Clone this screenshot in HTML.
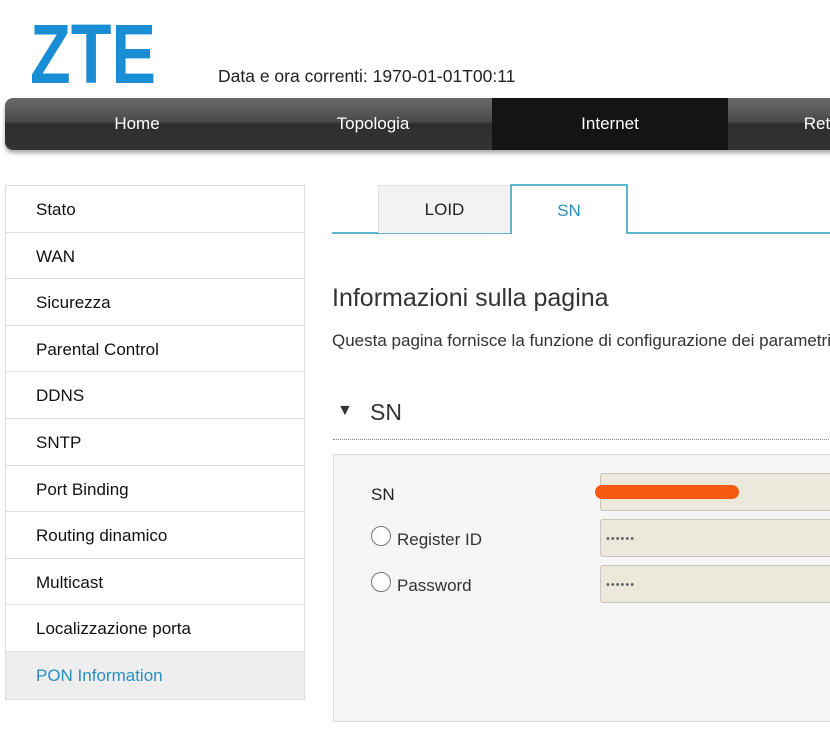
<!DOCTYPE html>
<html><head><meta charset="utf-8"><style>
*{margin:0;padding:0;box-sizing:border-box}
body{width:830px;height:746px;overflow:hidden;background:#fff;font-family:"Liberation Sans",sans-serif;color:#222;position:relative}
.a{position:absolute}
.nav{left:5px;top:98px;width:840px;height:52px;border-radius:8px 0 0 8px;background:linear-gradient(#6a6a6a 0%,#4a4a4a 45%,#2e2e2e 50%,#333 100%);box-shadow:0 3px 4px rgba(0,0,0,.35)}
.nav span{position:absolute;top:16px;color:#fff;font-size:17px;transform:translateX(-50%)}
.side{left:5px;top:185px;width:300px;border:1px solid #ddd}
.side div{height:46.6px;line-height:47px;padding-left:30px;font-size:17px;border-bottom:1px solid #ddd;color:#111}
.inp{left:600px;width:240px;height:38px;background:#ece8dc;border:1px solid #c8c5bc;border-radius:3px;font-size:11px;color:#666;padding:13px 0 0 5px;letter-spacing:1px}
.rad{width:20px;height:20px;border:1.5px solid #777;border-radius:50%;background:#fff}
</style></head><body>
<svg class="a" style="left:28px;top:18px" width="140" height="70"><text x="2" y="65" font-family="Liberation Sans" font-weight="bold" font-size="84" fill="#1a8ed4" textLength="126" lengthAdjust="spacingAndGlyphs">ZTE</text></svg>
<div class="a" style="left:218px;top:66px;font-size:17.5px;white-space:nowrap">Data e ora correnti: 1970-01-01T00:11</div>
<div class="a nav"><div class="a" style="left:487px;top:0;width:236px;height:52px;background:#141414"></div>
<span style="left:132px">Home</span><span style="left:368px">Topologia</span><span style="left:605px">Internet</span><span style="left:812px">Ret</span></div>
<div class="a side">
<div>Stato</div><div>WAN</div><div>Sicurezza</div><div>Parental Control</div><div>DDNS</div><div>SNTP</div><div>Port Binding</div><div>Routing dinamico</div><div>Multicast</div><div>Localizzazione porta</div><div style="color:#2a8fc0;background:#eee;border-bottom:0">PON Information</div>
</div>
<div class="a" style="left:332px;top:232px;width:500px;height:2px;background:#5fb6cc"></div>
<div class="a" style="left:378px;top:185px;width:133px;height:48px;background:#f2f2f2;border:1px solid #ddd;border-bottom:0;text-align:center;line-height:48px;font-size:17px">LOID</div>
<div class="a" style="left:510px;top:184px;width:118px;height:50px;background:#fff;border:2px solid #5fb6cc;border-bottom:0;text-align:center;line-height:50px;font-size:17px;color:#2a8fc0">SN</div>
<div class="a" style="left:332px;top:284px;font-size:25px;color:#333">Informazioni sulla pagina</div>
<div class="a" style="left:332px;top:331px;font-size:17px;color:#333;white-space:nowrap">Questa pagina fornisce la funzione di configurazione dei parametri</div>
<div class="a" style="left:337px;top:402px;font-size:16px;color:#333">▼</div>
<div class="a" style="left:370px;top:399px;font-size:23px;color:#333">SN</div>
<div class="a" style="left:333px;top:439px;width:500px;border-top:1px dotted #888"></div>
<div class="a" style="left:333px;top:454px;width:510px;height:268px;background:#f5f5f5;border:1px solid #ddd"></div>
<div class="a" style="left:371px;top:485px;font-size:17px">SN</div>
<div class="a rad" style="left:371px;top:526px"></div><div class="a" style="left:397px;top:530px;font-size:17px;color:#333">Register ID</div>
<div class="a rad" style="left:371px;top:572px"></div><div class="a" style="left:397px;top:576px;font-size:17px;color:#333">Password</div>
<div class="a inp" style="top:473px"></div>
<div class="a inp" style="top:519px">••••••</div>
<div class="a inp" style="top:565px">••••••</div>
<div class="a" style="left:595px;top:485px;width:144px;height:14px;background:#f45a10;border-radius:7px"></div>
</body></html>
